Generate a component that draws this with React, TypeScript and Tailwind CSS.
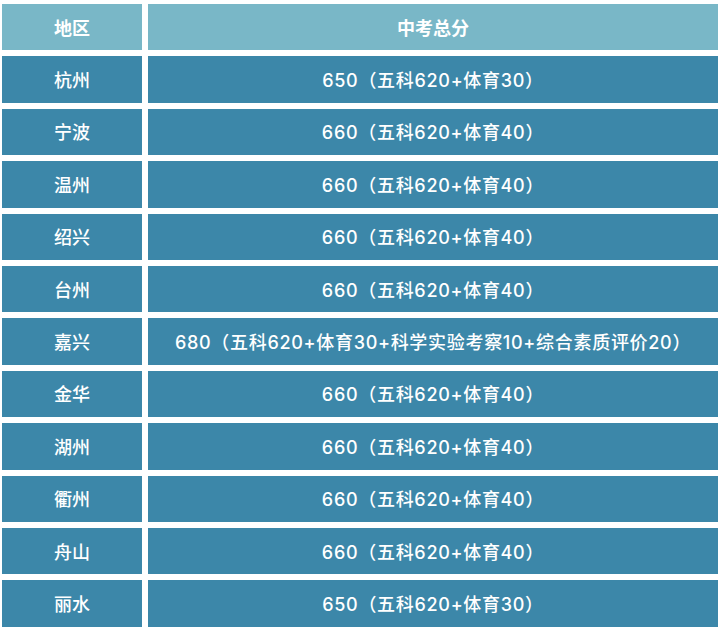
import React from "react";

const rows: [string, string][] = [
  ["杭州", "650（五科620+体育30）"],
  ["宁波", "660（五科620+体育40）"],
  ["温州", "660（五科620+体育40）"],
  ["绍兴", "660（五科620+体育40）"],
  ["台州", "660（五科620+体育40）"],
  ["嘉兴", "680（五科620+体育30+科学实验考察10+综合素质评价20）"],
  ["金华", "660（五科620+体育40）"],
  ["湖州", "660（五科620+体育40）"],
  ["衢州", "660（五科620+体育40）"],
  ["舟山", "660（五科620+体育40）"],
  ["丽水", "650（五科620+体育30）"],
];

export default function App() {
  return (
    <div
      className="w-[720px] h-[629px] bg-white pt-[4px] pl-[2px] pr-[2px] pb-[2px] text-white text-[18px]"
      style={{ fontFamily: 'Inter, "Noto Sans CJK SC", sans-serif' }}
    >
      <div className="grid grid-cols-[140px_570px] grid-rows-[repeat(12,46.4px)] gap-[6px]">
        <div className="bg-[#79b7c7] flex items-center justify-center font-bold pt-[2px]">地区</div>
        <div className="bg-[#79b7c7] flex items-center justify-center font-bold pt-[2px]">中考总分</div>
        {rows.map(([a, b]) => (
          <React.Fragment key={a}>
            <div className="bg-[#3c87a9] flex items-center justify-center font-medium pt-[2px]">{a}</div>
            <div className="bg-[#3c87a9] flex items-center justify-center font-medium tracking-[0.7px] pt-[2px]">{b}</div>
          </React.Fragment>
        ))}
      </div>
    </div>
  );
}
